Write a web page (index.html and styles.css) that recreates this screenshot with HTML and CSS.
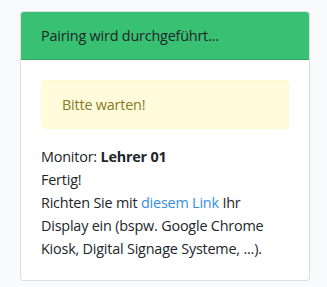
FILE: index.html
```html
<!DOCTYPE html>
<html lang="de">
<head>
<meta charset="utf-8">
<link rel="stylesheet" href="styles.css">
</head>
<body>
<div class="page">
  <div class="card">
    <div class="card-header">Pairing wird durchgeführt...</div>
    <div class="card-body">
      <div class="alert">Bitte warten!</div>
      <div>Monitor: <strong>Lehrer 01</strong></div>
      <div>Fertig!</div>
      <div>Richten Sie mit <a href="#">diesem Link</a> Ihr Display ein (bspw. Google Chrome Kiosk, Digital Signage Systeme, ...).</div>
    </div>
  </div>
</div>
</body>
</html>
```
FILE: styles.css
```css
html, body {
  margin: 0;
  background: #f8fafc;
}
body {
  font-family: "Open Sans", sans-serif;
  font-size: 14.4px;
  letter-spacing: -0.2px;
  line-height: 23px;
  color: #212529;
}
.page {
  padding: 11px 17px 0 20px;
}
.card {
  background: #fff;
  border: 1px solid rgba(0, 0, 0, 0.125);
  border-radius: 4px;
  overflow: hidden;
}
.card-header {
  background: #38c172;
  padding: 12px 20px;
  border-bottom: 1px solid rgba(0, 0, 0, 0.125);
}
.card-body {
  padding: 20px;
}
.alert {
  background: #fffbdb;
  border: 1px solid #fffacc;
  color: #857b26;
  border-radius: 4px;
  padding: 12px 20px;
  margin-bottom: 16px;
}
strong {
  font-weight: 700;
}
a {
  color: #3490dc;
  text-decoration: none;
}
```
